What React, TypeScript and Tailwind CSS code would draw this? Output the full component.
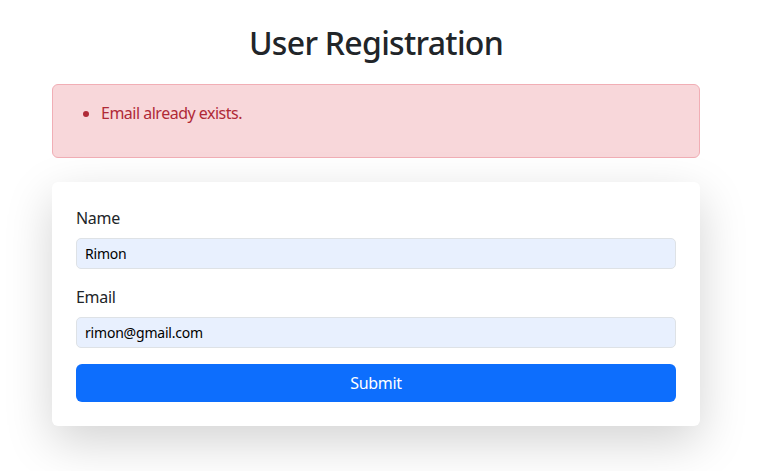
export default function App() {
  return (
    <div className="min-h-[471px] bg-white font-['Segoe_UI','Noto_Sans',sans-serif] text-[#212529]">
      <div className="ml-[52px] w-[648px] pt-6">
        <h2 className="mb-[22px] text-center text-[32px] font-medium leading-[38px] tracking-[-0.7px]">
          User Registration
        </h2>

        {/* Error alert */}
        <div className="mb-6 rounded-md border border-[#f1aeb5] bg-[#f8d7da] p-4 text-[#b02a37]">
          <ul className="mb-4 list-disc pl-8 text-[16px] leading-6 tracking-[-0.5px]">
            <li>Email already exists.</li>
          </ul>
        </div>

        {/* Form card */}
        <div className="rounded-md bg-white p-6 shadow-[0_1rem_3rem_rgba(0,0,0,0.175)]">
          <div className="mb-4">
            <label className="mb-2 block text-[16px] leading-6 tracking-[-0.3px]">Name</label>
            <input
              type="text"
              defaultValue="Rimon"
              className="block h-[31px] w-full rounded-[5px] border border-[#dee2e6] bg-[#e8f0fe] px-2 text-[14px] tracking-[-0.2px] text-black outline-none"
            />
          </div>
          <div className="mb-4">
            <label className="mb-2 block text-[16px] leading-6 tracking-[-0.3px]">Email</label>
            <input
              type="email"
              defaultValue="rimon@gmail.com"
              className="block h-[31px] w-full rounded-[5px] border border-[#dee2e6] bg-[#e8f0fe] px-2 text-[14px] tracking-[-0.2px] text-black outline-none"
            />
          </div>
          <button className="block h-[38px] w-full rounded-md bg-[#0d6efd] text-[16px] tracking-[-0.3px] text-white">
            Submit
          </button>
        </div>
      </div>
    </div>
  );
}
